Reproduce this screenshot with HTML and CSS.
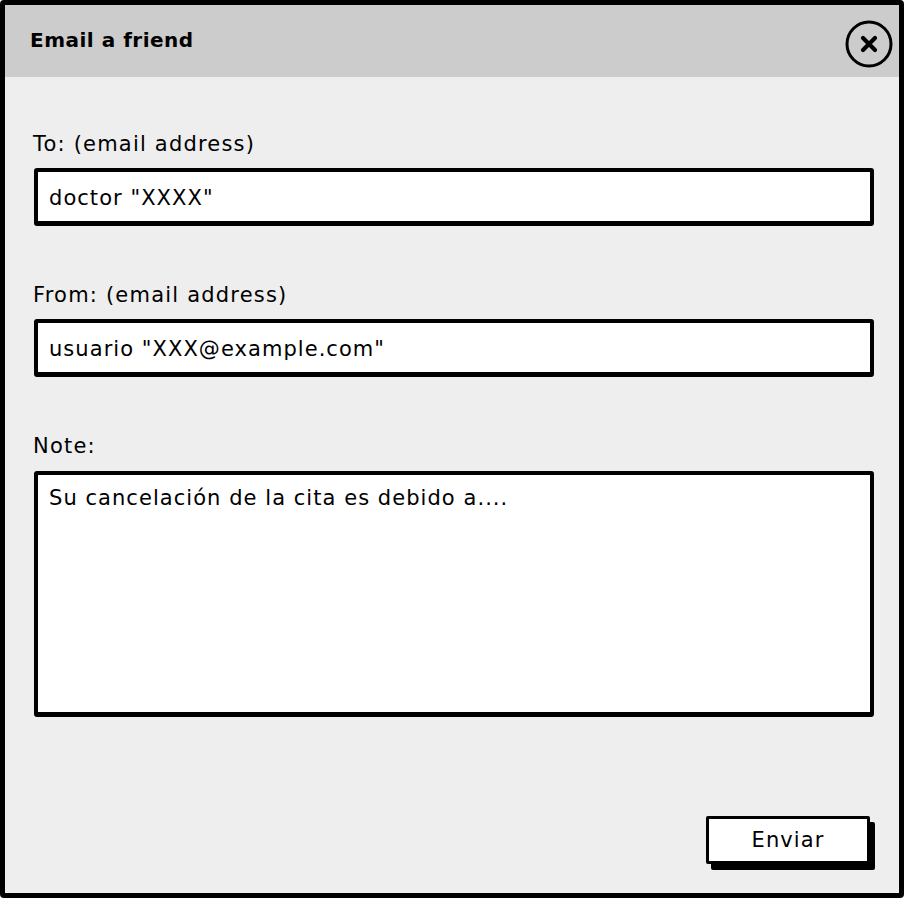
FILE: index.html
```html
<!DOCTYPE html>
<html>
<head>
<meta charset="utf-8">
<link rel="stylesheet" href="styles.css">
</head>
<body>
<div class="dialog">
  <div class="header">
    <span class="title">Email a friend</span>
    <svg class="close" width="50" height="50" viewBox="0 0 50 50">
      <circle cx="25" cy="25" r="22" fill="none" stroke="#000" stroke-width="3"/>
      <path d="M19 19 L31 31 M31 19 L19 31" stroke="#000" stroke-width="4.2" stroke-linecap="round"/>
    </svg>
  </div>
  <div class="body">
    <div class="label first">To: (email address)</div>
    <div class="field">doctor "XXXX"</div>
    <div class="label">From: (email address)</div>
    <div class="field">usuario "XXX@example.com"</div>
    <div class="label">Note:</div>
    <div class="area">Su cancelación de la cita es debido a....</div>
    <div class="actions">
      <button class="btn">Enviar</button>
    </div>
  </div>
</div>
</body>
</html>
```
FILE: styles.css
```css
html, body {
  margin: 0;
  padding: 0;
  background: #ffffff;
}
body {
  font-family: "DejaVu Sans", Lato, sans-serif;
  color: #000;
}
.dialog {
  box-sizing: border-box;
  width: 904px;
  height: 898px;
  border: 5px solid #000;
  border-radius: 4px;
  background: #eeeeee;
  display: flex;
  flex-direction: column;
}
.header {
  height: 72px;
  background: #cccccc;
  display: flex;
  align-items: center;
  justify-content: space-between;
  padding-left: 25px;
  padding-right: 5px;
}
.title {
  font-size: 20px;
  font-weight: 700;
  letter-spacing: 0.5px;
  margin-top: -3px;
}
.close {
  display: block;
  margin-top: 6px;
}
.body {
  flex: 1;
  display: flex;
  flex-direction: column;
  padding: 0 25px 0 28px;
}
.label {
  font-size: 21px;
  letter-spacing: 1.2px;
  line-height: 24px;
  height: 24px;
  padding-top: 1px;
  margin-top: 56px;
}
.label.first {
  margin-top: 54px;
}
.field, .area {
  box-sizing: border-box;
  background: #fff;
  border: 4px solid #000;
  border-bottom-width: 5px;
  border-radius: 3px;
  font-size: 21px;
  letter-spacing: 1.05px;
  margin-top: 12px;
  margin-left: 1px;
}
.field {
  height: 58px;
  line-height: 49px;
  padding-top: 2px;
  padding-left: 11px;
}
.area {
  height: 246px;
  margin-top: 13px;
  padding: 11px 11px;
  line-height: 24px;
}
.actions {
  flex: 1;
  display: flex;
  justify-content: flex-end;
  align-items: flex-end;
  padding-bottom: 29px;
}
.btn {
  box-sizing: border-box;
  width: 164px;
  height: 48px;
  margin-right: 4px;
  background: #fff;
  border: 3px solid #000;
  border-radius: 2px;
  box-shadow: 5px 6px 0 #000;
  font-family: "DejaVu Sans", Lato, sans-serif;
  font-size: 21px;
  letter-spacing: 1.1px;
  color: #000;
  padding: 0;
}
```
